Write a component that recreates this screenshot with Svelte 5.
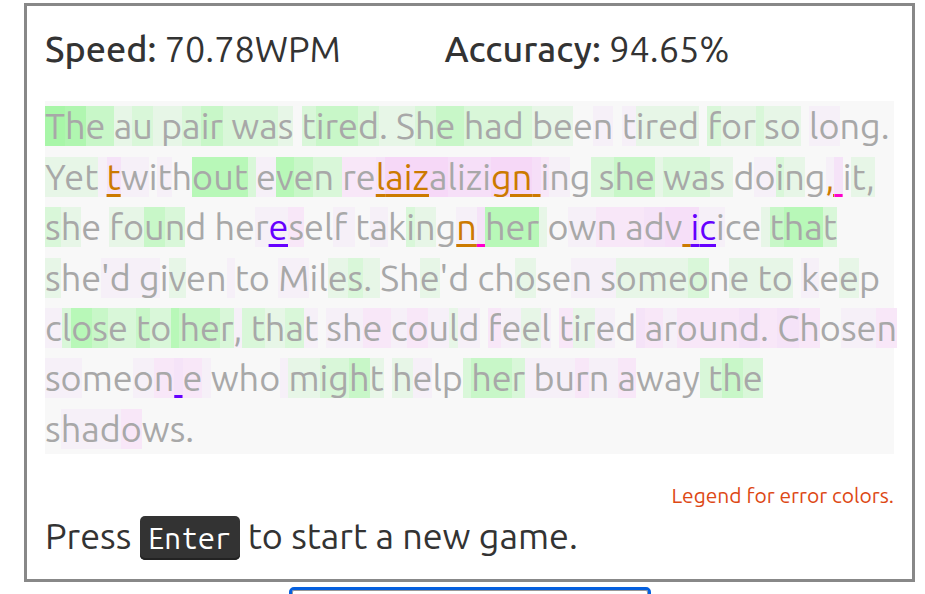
<script>
  // Each run is [text, heat, error]. Positive heat is fast (green), negative is slow (pink).
  const lines = [
    [['T', 6], ['h', 5], ['e ', 3], ['a', 1], ['u', 2], [' p', 1], ['a', 2], ['ir', 3], [' wa', 2], ['s', 1], [' ', 0], ['t', 2], ['ire', 3], ['d', 2], ['. S', 1], ['h', 2], ['e ', 3], ['had ', 2], ['be', 1], ['e', 0], ['n', -1], [' ', 0], ['t', -1], ['ired', 1], [' ', 0], ['f', 2], ['or', 1], [' ', 2], ['so', 1], [' ', 0], ['lo', -1], ['ng.', 0]],
    [['Yet', 1], [' ', -1], ['t', -3, 'swap'], ['w', -1], ['i', 0], ['t', -1], ['h', 0], ['out', 4], [' ', 2], ['e', -1], ['v', 4], ['e', 3], ['n ', 2], ['re', -2], ['l', -3, 'swap'], ['aiz', -5, 'swap'], ['a', -5], ['lizi', -4], ['gn', -5, 'swap'], [' ', -4, 'swap'], ['i', -2], ['n', -1], ['g', 0], [' s', 2], ['he', 3], [' ', 1], ['wa', 2], ['s ', 1], ['d', 0], ['o', -1], ['i', 2], ['n', 1], ['g', 0], [',', -1, 'swap'], [' ', -3, 'miss'], ['i', 0], ['t,', 1]],
    [['s', 2], ['h', 1], ['e ', 0], ['fo', 1], ['u', 3], ['n', 2], ['d he', 0], ['r', -1], ['e', -1, 'extra'], ['s', -2], ['el', 0], ['f ', -1], ['t', 0], ['a', -1], ['k', 0], ['i', 2], ['n', 1], ['g', 0], ['n', -1, 'swap'], [' ', -3, 'miss'], ['her', 4], [' ', 1], ['o', 0], ['w', -1], ['n a', -2], ['d', -3], ['v', -4], [' ', -4, 'swap'], ['i', -4, 'extra'], ['c', -1, 'extra'], ['i', -1], ['ce', 0], [' ', 1], ['t', 3], ['ha', 4], ['t', 2]],
    [['s', 1], ['he', 0], ["'d g", -1], ['i', 0], ['v', 1], ['en', 0], [' ', -1], ['to ', 0], ['M', -1], ['il', 0], ['e', 1], ['s', 2], ['. ', 1], ['Sh', 0], ['e', 1], ["'d ch", 0], ['o', 1], ['se', 0], ['n s', -1], ['ome', 1], ['o', 2], ['n', 0], ['e to', 1], [' ', 0], ['k', -1], ['e', 0], ['e', 1], ['p', 0]],
    [['c', -1], ['l', 2], ['o', 4], ['s', 3], ['e ', 2], ['t', 3], ['o', 2], [' ', 4], ['he', 3], ['r', 2], [',', -1], [' t', 2], ['h', 1], ['a', 2], ['t', -1], [' ', 0], ['sh', -1], ['e ', -2], ['c', -1], ['o', -2], ['u', -1], ['l', 1], ['d', -1], [' ', 0], ['f', -2], ['e', -1], ['e', 1], ['l', -1], [' ', 0], ['t', -2], ['ir', 1], ['e', -1], ['d', 0], [' ', -3], ['a', -2], ['r', -1], ['oun', -2], ['d', -3], ['. ', -2], ['C', -3], ['h', -2], ['o', 0], ['se', -1], ['n', -2]],
    [['so', -1], ['me', 0], ['o', -1], ['n', -2], [' ', -3, 'extra'], ['e', -2], [' ', -1], ['who', 0], [' ', -1], ['m', 1], ['ig', 2], ['h', 3], ['t', 1], [' ', 0], ['h', 1], ['e', -1], ['lp', 0], [' ', 2], ['he', 3], ['r', 2], [' bu', -1], ['r', -2], ['n ', -1], ['a', -2], ['way', 0], [' t', 2], ['h', 3], ['e', 2]],
    [['s', 0], ['had', -1], ['o', -2], ['ws.', 0]]
  ];

  const heatClass = (n) => (n > 0 ? `fast${n}` : n < 0 ? `slow${-n}` : '');
</script>

<main>
  <section class="card">
    <div class="stats">
      <div><strong>Speed:</strong> 70.78WPM</div>
      <div><strong>Accuracy:</strong> 94.65%</div>
    </div>

    <div class="passage">
      {#each lines as line}
        <div class="line">{#each line as [text, heat, error]}<span class="run {heatClass(heat)} {error ?? ''}">{text}</span>{/each}</div>
      {/each}
    </div>

    <div class="legend"><a href="#legend">Legend for error colors.</a></div>
    <p class="hint">Press <kbd>Enter</kbd> to start a new game.</p>
  </section>
  <input class="entry" type="text" aria-label="Type here" />
</main>

<style>
  :global(body) {
    margin: 0;
    background: #fff;
  }
  main {
    padding: 3px 10px 0 24px;
    font-family: Ubuntu, "Noto Sans", sans-serif;
    font-size: 36px;
    line-height: 1.4;
    color: #333;
  }
  .card {
    border: 3px solid #888;
    padding: 18px;
  }
  .stats {
    display: grid;
    grid-template-columns: 8fr 9fr;
    margin-bottom: 27px;
  }
  strong {
    font-weight: 500;
  }
  .passage {
    background: #f8f8f8;
    color: #a8a8a8;
  }
  .line {
    white-space: pre;
  }
  .run {
    display: inline-block;
    height: 40px;
    line-height: 40px;
  }
  .fast1 { background: #e7f6e7; }
  .fast2 { background: #d9f7d9; }
  .fast3 { background: #c8f7c8; }
  .fast4 { background: #b8f8b8; }
  .fast5 { background: #b0f6b0; }
  .fast6 { background: #a8f6a8; }
  .slow1 { background: #f6f0f8; }
  .slow2 { background: #f8e7f8; }
  .slow3 { background: #f5e3f8; }
  .slow4 { background: #f6dff8; }
  .slow5 { background: #f6d8f7; }
  .swap, .miss, .extra {
    text-decoration: underline;
    text-decoration-thickness: 3px;
    text-underline-offset: 4px;
  }
  .swap { color: #cc7a00; }
  .miss { color: #ff00cc; }
  .extra { color: #6600ff; }
  .legend {
    margin-top: 27px;
    text-align: right;
    font-size: 21px;
  }
  .legend a {
    color: #dd4814;
    text-decoration: none;
  }
  .hint {
    margin: 0;
  }
  kbd {
    display: inline-block;
    padding: 0 8px;
    border-radius: 5px;
    background: #333;
    box-shadow: inset 0 -2px 0 #222;
    color: #fff;
    font-family: "Ubuntu Mono", "DejaVu Sans Mono", monospace;
    font-size: 30px;
    line-height: 44px;
  }
  .entry {
    display: block;
    box-sizing: border-box;
    width: 356px;
    height: 44px;
    margin: 8px auto 0;
    border: 1px solid #999;
    border-radius: 2px;
    outline: 3px solid #0560df;
    font: inherit;
  }
</style>
